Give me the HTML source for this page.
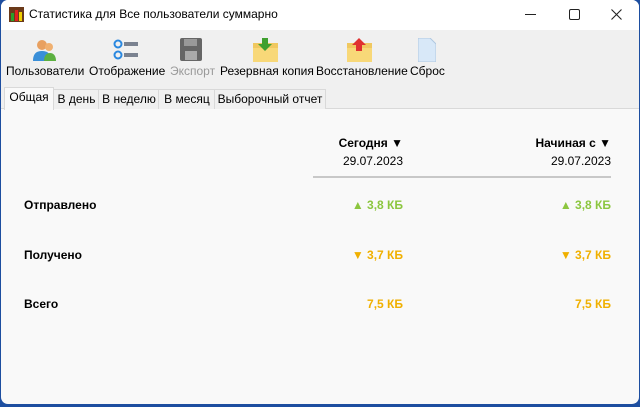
<!DOCTYPE html><html><head><meta charset="utf-8"><style>
body{margin:0;width:640px;height:407px;background:#1d4ea0;font-family:"Liberation Sans",sans-serif;font-size:12px;overflow:hidden;position:relative;color:#000}
.win{position:absolute;left:1px;top:0;width:638px;height:404px;background:#f9f9f9;border-radius:7px;overflow:hidden}
.title{position:absolute;left:0;top:0;width:638px;height:30px;background:#fff}
.tb{position:absolute;left:0;top:30px;width:638px;height:58px;background:#f0f0f0}
.tabs{position:absolute;left:0;top:88px;width:638px;height:20px;background:#f0f0f0;border-bottom:1px solid #d9d9d9}
.t{position:absolute;top:89px;height:19px;line-height:19px;text-align:center;border:1px solid #d9d9d9;border-bottom:none;background:#f0f0f0;font-size:12px}
.a{position:absolute;white-space:nowrap}
.lbl{top:64px;font-size:12px}
.r{text-align:right}
.g{color:#8cc63f;font-weight:bold;font-size:12px}
.o{color:#f0b000;font-weight:bold;font-size:12px}
</style></head><body><div class="win">
<div class="title"></div>
<svg class="a" style="left:8px;top:7px" width="15" height="15"><rect width="15" height="15" fill="#6b3a1a"/><rect x="2" y="6" width="3" height="8" fill="#2aa02a"/><rect x="6" y="3" width="3" height="11" fill="#e02020"/><rect x="10" y="5" width="3" height="9" fill="#f0d000"/></svg>
<div class="a" style="left:28px;top:7px;font-size:12px">Статистика для Все пользователи суммарно</div>
<div class="a" style="left:524px;top:14px;width:11px;height:1px;background:#222"></div>
<div class="a" style="left:568px;top:9px;width:9px;height:9px;border:1px solid #222;border-radius:2px"></div>
<svg class="a" style="left:610px;top:9px" width="11" height="11"><path d="M0.5 0.5L10.5 10.5M10.5 0.5L0.5 10.5" stroke="#222" stroke-width="1.1"/></svg>
<div class="tb"></div>
<svg class="a" style="left:31px;top:38px" width="25" height="24"><circle cx="10" cy="7" r="5" fill="#e8a060"/><path d="M1 23c0-8 4-10 9-10s9 2 9 10z" fill="#3a8fd8"/><circle cx="17" cy="9" r="4" fill="#f0b070"/><path d="M12 23c0-6 3-8 6-8s6 2 6 8z" fill="#5cb040"/></svg>
<svg class="a" style="left:112px;top:39px" width="26" height="22"><circle cx="5" cy="5" r="3.5" fill="none" stroke="#2a88e0" stroke-width="2"/><circle cx="5" cy="16" r="3.5" fill="none" stroke="#2a88e0" stroke-width="2"/><rect x="11" y="3" width="14" height="4" fill="#7a8290"/><rect x="11" y="14" width="14" height="4" fill="#7a8290"/></svg>
<svg class="a" style="left:179px;top:38px" width="22" height="23"><rect x="0" y="0" width="22" height="23" rx="2" fill="#666"/><rect x="4" y="1" width="13" height="7" fill="#999"/><rect x="5" y="13" width="12" height="9" fill="#aaa"/></svg>
<svg class="a" style="left:252px;top:38px" width="25" height="24"><rect x="0" y="5" width="25" height="19" fill="#f0c860"/><rect x="0" y="10" width="25" height="14" fill="#f8d878"/><path d="M9 0h6v6h4l-7 7-7-7h4z" fill="#40a030"/></svg>
<svg class="a" style="left:346px;top:38px" width="25" height="24"><rect x="0" y="5" width="25" height="19" fill="#f0c860"/><rect x="0" y="10" width="25" height="14" fill="#f8d878"/><path d="M9 13h6v-6h4l-7-7-7 7h4z" fill="#e03030"/></svg>
<svg class="a" style="left:417px;top:38px" width="18" height="24"><path d="M0 0h12l6 6v18h-18z" fill="#d8e8f8" stroke="#b0c8e0"/></svg>
<div class="a lbl" style="left:5px">Пользователи</div>
<div class="a lbl" style="left:88px">Отображение</div>
<div class="a lbl" style="left:169px;color:#999">Экспорт</div>
<div class="a lbl" style="left:219px">Резервная копия</div>
<div class="a lbl" style="left:315px">Восстановление</div>
<div class="a lbl" style="left:409px">Сброс</div>
<div class="tabs"></div>
<div class="t" style="left:52px;width:45px">В день</div>
<div class="t" style="left:97px;width:60px">В неделю</div>
<div class="t" style="left:157px;width:56px">В месяц</div>
<div class="t" style="left:213px;width:110px">Выборочный отчет</div>
<div class="t" style="left:3px;width:48px;top:87px;height:22px;background:#f9f9f9">Общая</div>
<div class="a r" style="right:236px;top:136px;font-weight:bold">Сегодня ▼</div>
<div class="a r" style="right:28px;top:136px;font-weight:bold">Начиная с ▼</div>
<div class="a r" style="right:236px;top:154px">29.07.2023</div>
<div class="a r" style="right:28px;top:154px">29.07.2023</div>
<div class="a" style="left:312px;top:176px;width:298px;height:2px;background:#c8c8c8"></div>
<div class="a" style="left:23px;top:198px;font-weight:bold">Отправлено</div>
<div class="a" style="left:23px;top:248px;font-weight:bold">Получено</div>
<div class="a" style="left:23px;top:297px;font-weight:bold">Всего</div>
<div class="a r g" style="right:236px;top:198px">▲ 3,8 КБ</div>
<div class="a r g" style="right:28px;top:198px">▲ 3,8 КБ</div>
<div class="a r o" style="right:236px;top:248px">▼ 3,7 КБ</div>
<div class="a r o" style="right:28px;top:248px">▼ 3,7 КБ</div>
<div class="a r o" style="right:236px;top:297px">7,5 КБ</div>
<div class="a r o" style="right:28px;top:297px">7,5 КБ</div>
</div></body></html>
